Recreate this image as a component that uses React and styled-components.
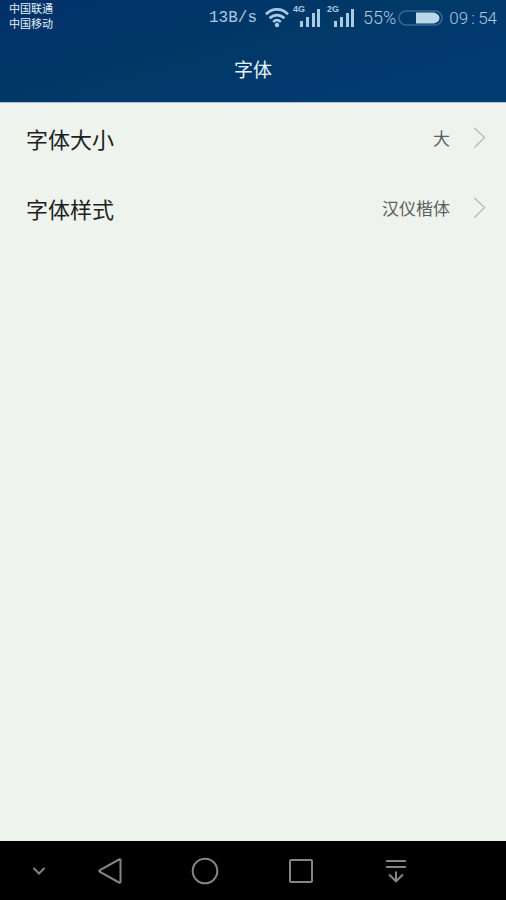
import React from "react";
import styled, { createGlobalStyle } from "styled-components";

const GlobalStyle = createGlobalStyle`
  *, *::before, *::after { box-sizing: border-box; }
  body {
    margin: 0;
    background: #eef3ee;
    font-family: "KaiTi", "STKaiti", "Noto Sans CJK SC", sans-serif;
  }
  button { border: 0; padding: 0; background: none; font: inherit; color: inherit; cursor: pointer; }
`;

const Screen = styled.div`
  display: flex;
  flex-direction: column;
  min-height: 100vh;
`;

const Header = styled.header`
  background: linear-gradient(165deg, #02306b 0%, #003866 45%, #023a70 70%, #003c70 100%);
  border-bottom: 1px solid #a9c4d4;
  color: #e4f3f8;
`;

const StatusBar = styled.div`
  display: flex;
  justify-content: space-between;
  height: 36px;
  padding: 0 9px;
`;

const Carriers = styled.div`
  display: flex;
  flex-direction: column;
  padding-top: 1px;
  font-size: 11px;
  line-height: 15px;
  white-space: nowrap;
`;

const StatusItems = styled.div`
  display: flex;
  align-items: center;
  color: #a9cbe6;
  font-family: Roboto, "Liberation Sans", sans-serif;
  font-size: 17px;
  font-weight: 300;
  line-height: 36px;
`;

const Speed = styled.span`
  margin-right: 8px;
  font-family: "Liberation Mono", monospace;
  font-size: 16px;
`;

const Signal = styled.span`
  display: flex;
  align-items: flex-start;
  width: 28px;
  height: 26px;
  margin-left: ${(p) => (p.$spaced ? 6 : 4)}px;
  font-family: "Liberation Sans", sans-serif;
  font-size: 9px;
  font-weight: 700;
  line-height: 9px;
`;

const Bars = styled.svg`
  flex: none;
  margin: 3px 0 0 -6px;
`;

const Percent = styled.span`
  margin-left: 8px;
  font-size: 18px;
`;

const Battery = styled.svg`
  flex: none;
  margin: 0 6px 0 2px;
`;

const Clock = styled.time`
  display: flex;
`;

const Colon = styled.span`
  width: 10px;
  text-align: center;
`;

const Title = styled.h1`
  margin: 0;
  padding: 18px 0;
  font-size: 19px;
  font-weight: 400;
  line-height: 30px;
  text-align: center;
`;

const Settings = styled.main`
  flex: 1;
  background: #eef3ee;
`;

const Row = styled.button`
  display: flex;
  align-items: center;
  width: 100%;
  height: 70px;
  && { padding: 0 20px 0 26px; }
  text-align: left;
`;

const Label = styled.span`
  flex: 1;
  color: #1d211e;
  font-size: 22px;
  line-height: 32px;
`;

const Value = styled.span`
  margin-right: 23px;
  color: #5a5f5b;
  font-size: 17px;
  line-height: 24px;
`;

const NavBar = styled.nav`
  display: grid;
  grid-template-columns: 62px repeat(4, 1fr) 62px;
  height: 59px;
  background: #000;
`;

const NavButton = styled.button`
  display: flex;
  align-items: center;
  justify-content: center;
  && { padding-left: ${(p) => (p.$inset ? 16 : 0)}px; }

  svg { fill: none; stroke: #858585; stroke-width: 2; }
`;

function SignalBars({ network, spaced }) {
  return (
    <Signal $spaced={spaced}>
      {network}
      <Bars width="22" height="19" viewBox="0 0 22 19" fill="currentColor" aria-hidden="true">
        <rect x="1" y="13" width="3" height="6" />
        <rect x="7" y="9" width="3" height="10" />
        <rect x="13" y="5" width="3" height="14" />
        <rect x="18" y="1" width="3" height="18" />
      </Bars>
    </Signal>
  );
}

function SettingRow({ label, value }) {
  return (
    <Row type="button">
      <Label>{label}</Label>
      <Value>{value}</Value>
      <svg width="13" height="22" viewBox="0 0 13 22" fill="none" stroke="#b4b9b5" strokeWidth="1.3" aria-hidden="true">
        <path d="M1.5 1L11.5 10.5L1.5 20.5" />
      </svg>
    </Row>
  );
}

export default function App() {
  return (
    <Screen>
      <GlobalStyle />
      <Header>
        <StatusBar>
          <Carriers>
            <span>中国联通</span>
            <span>中国移动</span>
          </Carriers>
          <StatusItems>
            <Speed>13B/s</Speed>
            <svg width="24" height="22" viewBox="0 0 24 22" fill="none" stroke="currentColor" strokeWidth="2.7" aria-label="Wi-Fi">
              <path d="M1 7.2C7.4.8 16.6.8 23 7.2M4.6 11.2C9 7 15 7 19.4 11.2M8.2 15C10.5 12.8 13.5 12.8 15.8 15" />
              <circle cx="12" cy="18" r="2.2" fill="currentColor" stroke="none" />
            </svg>
            <SignalBars network="4G" />
            <SignalBars network="2G" spaced />
            <Percent>55%</Percent>
            <Battery width="45" height="16" viewBox="0 0 45 16" aria-label="55%">
              <rect x="1" y="1" width="43" height="14" rx="7" fill="none" stroke="#346995" strokeWidth="1.6" />
              <path d="M18 2.5H36Q41.5 4 41.5 8Q41.5 12 36 13.5H18Z" fill="#b9d8e9" />
            </Battery>
            <Clock dateTime="09:54">
              09<Colon>:</Colon>54
            </Clock>
          </StatusItems>
        </StatusBar>
        <Title>字体</Title>
      </Header>
      <Settings>
        <SettingRow label="字体大小" value="大" />
        <SettingRow label="字体样式" value="汉仪楷体" />
      </Settings>
      <NavBar>
        <NavButton type="button" $inset aria-label="Hide navigation bar">
          <svg width="14" height="10" viewBox="0 0 14 10">
            <path d="M1.5 2L7 7.5L12.5 2" />
          </svg>
        </NavButton>
        <NavButton type="button" aria-label="Back">
          <svg width="24" height="26" viewBox="0 0 24 26">
            <path d="M22 2Q22.5 1 21 1.5L2 12Q.5 13 2 14L21 24.5Q22.5 25 22.5 24V2Z" />
          </svg>
        </NavButton>
        <NavButton type="button" aria-label="Home">
          <svg width="28" height="28" viewBox="0 0 28 28">
            <circle cx="14" cy="14" r="12.3" />
          </svg>
        </NavButton>
        <NavButton type="button" aria-label="Recent apps">
          <svg width="24" height="24" viewBox="0 0 24 24">
            <rect x="1" y="1" width="22" height="22" rx="1" />
          </svg>
        </NavButton>
        <NavButton type="button" aria-label="Open notifications">
          <svg width="20" height="24" viewBox="0 0 20 24">
            <path d="M0 2H20M0 8H20M10 12.5V22M3 15.5L10 22.3L17 15.5" />
          </svg>
        </NavButton>
      </NavBar>
    </Screen>
  );
}
